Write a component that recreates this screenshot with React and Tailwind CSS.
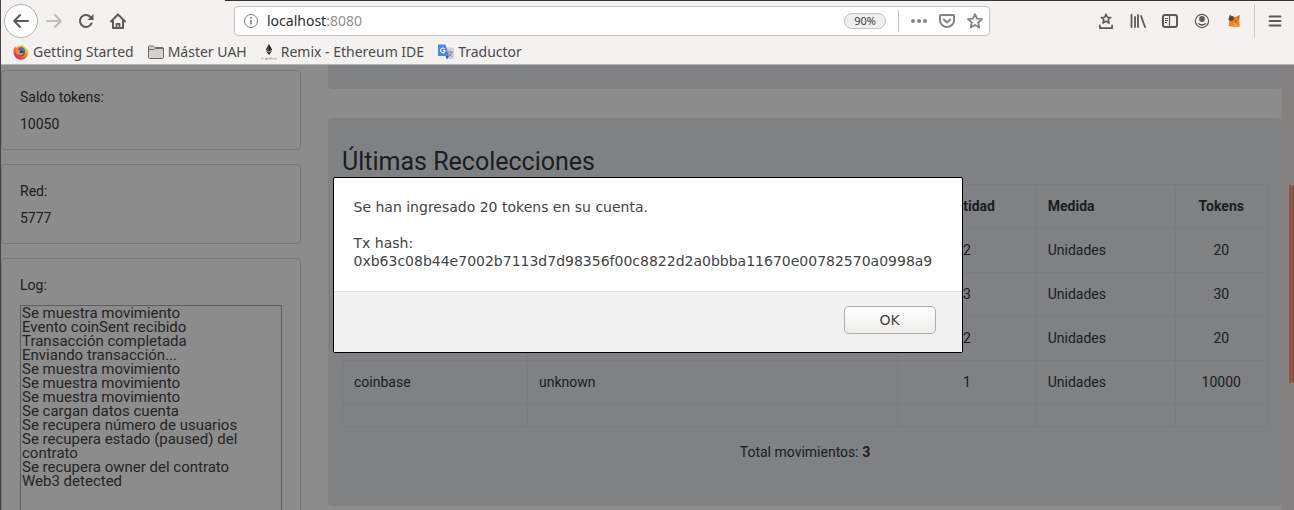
const bookmarks = [
  { label: "Getting Started", Icon: FirefoxIcon },
  { label: "Máster UAH", Icon: FolderIcon },
  { label: "Remix - Ethereum IDE", Icon: RemixIcon },
  { label: "Traductor", Icon: TranslateIcon },
];

const log = [
  "Se muestra movimiento",
  "Evento coinSent recibido",
  "Transacción completada",
  "Enviando transacción...",
  "Se muestra movimiento",
  "Se muestra movimiento",
  "Se muestra movimiento",
  "Se cargan datos cuenta",
  "Se recupera número de usuarios",
  "Se recupera estado (paused) del contrato",
  "Se recupera owner del contrato",
  "Web3 detected",
].join("\n");

const rows = [
  ["", "", "2", "Unidades", "20"],
  ["", "", "3", "Unidades", "30"],
  ["", "", "2", "Unidades", "20"],
  ["coinbase", "unknown", "1", "Unidades", "10000"],
];

function FirefoxIcon() {
  return (
    <svg className="size-4" viewBox="0 0 16 16" aria-hidden="true">
      <defs>
        <linearGradient id="fox" x1="0.85" y1="0.1" x2="0.2" y2="0.95">
          <stop offset="0" stopColor="#ffe226" />
          <stop offset="0.35" stopColor="#ff9a1f" />
          <stop offset="0.7" stopColor="#ff4a3d" />
          <stop offset="1" stopColor="#d9127c" />
        </linearGradient>
      </defs>
      <path d="M1.2 4.2 2 2.2l1.3 1.5C4.800 2 6.500 1.600 8 2c.2-.8.800-1.400 1.600-1.800.3 1.400 1.600 2 2.700 3 1 .9 1.500 1.600 1.700 2.400l.4-.8c1.600 3.600.8 7.200-1.700 9.200-3 2.400-7.400 2.100-10-.5C.4 11.200-.2 7.400 1.200 4.200z" fill="url(#fox)" />
      <circle cx="8" cy="8" r="3.900" fill="#174a9c" />
      <path d="M6.800 2.800c1.800-.5 4.300.8 5 2.900.4 1.500 0 3.300-1 4.200.1-1.900-.8-3.500-2.400-4C7.200 5.500 6.600 4.100 6.800 2.800z" fill="#2b7de0" />
      <path d="M2.500 5.500c1.300-.8 2.700-.6 3.600.2l1.700.2c-.2.8-1.200 1.100-1.500 1.800.2 1.200 1.300 1.700 2.500 1.300 1-.3 1.800.1 2.100.6-1.300 2-3.800 2.400-5.700 1.200-2.100-1.200-3-3.300-2.700-5.300z" fill="#ff8a1c" />
    </svg>
  );
}

function FolderIcon() {
  return (
    <svg className="size-4" viewBox="0 0 16 16" fill="#d4d2d0" stroke="#6a6865" aria-hidden="true">
      <path d="M.5 3c0-.6.4-1 1-1h3.600c.5 0 .8.2 1.100.6L7 3.500h7.500c.6 0 1 .4 1 1v9c0 .6-.4 1-1 1h-13c-.6 0-1-.4-1-1z" />
      <path d="M.5 5.500h5c.8 0 1.200-1 2-1h8" fill="none" />
    </svg>
  );
}

function RemixIcon() {
  return (
    <svg className="size-4" viewBox="0 0 16 16" aria-hidden="true">
      <path d="M8 0l3.200 5.800L8 7.800 4.800 5.800z" fill="#2a2a2a" />
      <path d="M8 0v7.800L4.800 5.800z" fill="#4c4c4c" />
      <path d="M4.800 6.600 8 8.600l3.200-2L8 11z" fill="#1f1f1f" />
      <path d="M1 15.500V14h1.500M4.500 14.800h2V14h-2v1.500h2M8 15.500V14h3v1.500M9.500 14v1.500M12.300 14v1.500M13.500 14l2 1.500M15.500 14l-2 1.500" fill="none" stroke="#aaa6a2" strokeWidth=".8" />
    </svg>
  );
}

function TranslateIcon() {
  return (
    <svg className="size-4" viewBox="0 0 16 16" aria-hidden="true">
      <path d="M6 3.500h9c.5 0 1 .4 1 1V14c0 .6-.5 1-1 1H10z" fill="#d3d3d3" />
      <path d="M9.500 8h5.500M12.200 6.800V8M14 8c-.5 2-2 3.500-3.500 4.500M11 9.200c.6 1.500 1.700 2.600 3.200 3.400" fill="none" stroke="#72818a" strokeWidth=".9" />
      <path d="M1 .5h6.500L11 12H1c-.6 0-1-.4-1-1V1.500c0-.6.4-1 1-1z" fill="#4a86ee" />
      <path d="M7.500 12H11l-2 3.500z" fill="#2a56c6" />
      <path d="M6.600 4.800A2.300 2.300 0 1 0 7.200 6.500H5" fill="none" stroke="#fff" strokeWidth="1.100" />
    </svg>
  );
}

function BackIcon() {
  return (
    <svg className="size-4" viewBox="0 0 16 16" fill="none" stroke="#5c5b5a" strokeWidth="2" strokeLinecap="round" strokeLinejoin="round" aria-hidden="true">
      <path d="M15 8H1.500M7 2 1.200 8 7 14" />
    </svg>
  );
}

function ForwardIcon() {
  return (
    <svg className="size-4" viewBox="0 0 16 16" fill="none" stroke="#bebdbb" strokeWidth="2" strokeLinecap="round" strokeLinejoin="round" aria-hidden="true">
      <path d="M1 8h13.500M9 2l5.800 6L9 14" />
    </svg>
  );
}

function ReloadIcon() {
  return (
    <svg className="size-4" viewBox="0 0 16 16" aria-hidden="true">
      <path d="M13.500 10.300A6 6 0 1 1 12.300 3.800L14 5.500" fill="none" stroke="#5c5b5a" strokeWidth="2" strokeLinecap="round" />
      <path d="M15.500 1v6h-6z" fill="#5c5b5a" />
    </svg>
  );
}

function HomeIcon() {
  return (
    <svg className="size-4" viewBox="0 0 16 16" fill="none" stroke="#5c5b5a" strokeWidth="2" strokeLinecap="round" strokeLinejoin="round" aria-hidden="true">
      <path d="M1 8.500 8 1.500l7 7M3 8v7h10V8" />
      <path d="M6.500 15v-4h3v4" strokeWidth="1.800" />
    </svg>
  );
}

function InfoIcon() {
  return (
    <svg className="size-4 shrink-0" viewBox="0 0 16 16" aria-hidden="true">
      <circle cx="8" cy="8" r="6.500" fill="none" stroke="#7c7c7c" />
      <path d="M8 7v4.500" stroke="#7c7c7c" strokeWidth="1.600" />
      <circle cx="8" cy="4.800" r="1" fill="#7c7c7c" />
    </svg>
  );
}

function DotsIcon() {
  return (
    <svg className="size-4" viewBox="0 0 16 16" fill="#848484" aria-hidden="true">
      <circle cx="2" cy="8" r="2" />
      <circle cx="8" cy="8" r="2" />
      <circle cx="14" cy="8" r="2" />
    </svg>
  );
}

function PocketIcon() {
  return (
    <svg className="size-4" viewBox="0 0 16 16" fill="none" stroke="#848484" strokeWidth="2" strokeLinecap="round" strokeLinejoin="round" aria-hidden="true">
      <path d="M2 2h12c.6 0 1 .4 1 1v4.500a7 6.500 0 0 1-14 0V3c0-.6.4-1 1-1z" />
      <path d="M4.800 6.500 8 9.500l3.200-3" />
    </svg>
  );
}

function StarIcon() {
  return (
    <svg className="size-4" viewBox="0 0 16 16" fill="none" stroke="#848484" strokeWidth="1.800" strokeLinejoin="round" aria-hidden="true">
      <path d="M8 1.200l2 4.500 5 .5-3.800 3.300 1.100 5L8 12l-4.300 2.500 1.100-5L1 6.200l5-.5z" />
    </svg>
  );
}

function BookmarksTrayIcon() {
  return (
    <svg className="size-4" viewBox="0 0 16 16" fill="none" stroke="#5c5b5a" strokeLinejoin="round" aria-hidden="true">
      <path d="M8 1.200l1.300 3 3.400.3-2.500 2.200.8 3.400-3-1.800-3 1.800.8-3.400-2.500-2.200 3.400-.3z" strokeWidth="1.600" />
      <path d="M1.900 12.500v2.600h12.200v-2.600" strokeWidth="1.800" strokeLinecap="round" />
    </svg>
  );
}

function LibraryIcon() {
  return (
    <svg className="size-4" viewBox="0 0 16 16" stroke="#5c5b5a" strokeWidth="1.800" strokeLinecap="round" aria-hidden="true">
      <path d="M1.500 2v12M5 4v10M8 2v12M11 3l4 11" />
    </svg>
  );
}

function SidebarIcon() {
  return (
    <svg className="size-4" viewBox="0 0 16 16" fill="none" stroke="#5c5b5a" aria-hidden="true">
      <rect x="1" y="2" width="14" height="12" rx="2" strokeWidth="2" />
      <path d="M7.500 2v12" strokeWidth="1.200" />
      <path d="M3 5.500h3M3 7.500h3M3 9.500h2" />
    </svg>
  );
}

function AccountIcon() {
  return (
    <svg className="size-4" viewBox="0 0 16 16" aria-hidden="true">
      <circle cx="8" cy="8" r="6.600" fill="none" stroke="#5c5b5a" strokeWidth="1.200" />
      <circle cx="8" cy="6" r="2.900" fill="#5c5b5a" />
      <path d="M3.500 10.200h1.800c1.600 1.200 3.800 1.200 5.400 0h1.800a5.200 5.200 0 0 1-9 0z" fill="#5c5b5a" />
    </svg>
  );
}

function MetamaskIcon() {
  return (
    <svg className="size-4" viewBox="0 0 16 16" aria-hidden="true">
      <path d="M4 2.500 8 4l3-.3 2.500-1.700-.3 5.500.3 3.500.3 2.500H6l-3.500-.5L3 10.500z" fill="#ee8020" />
      <path d="M3.800 2 7.800 3.800 8 6.500 5 8.500 2.300 6.500z" fill="#6d4424" />
      <path d="M11 3.800 13.500 2l-.3 4.500-1.900-.8z" fill="#c9671a" />
      <path d="M7.500 9.500 11 11l1.500 3H7z" fill="#f59a35" />
      <circle cx="9.800" cy="8" r=".8" fill="#6b3d1d" />
    </svg>
  );
}

function MenuIcon() {
  return (
    <svg className="size-4" viewBox="0 0 16 16" stroke="#5c5b5a" strokeWidth="1.800" strokeLinecap="round" aria-hidden="true">
      <path d="M2.500 3.500h11M2.500 8h11M2.500 12.500h11" />
    </svg>
  );
}

const toolbarTools = [
  { label: "Marcadores", Icon: BookmarksTrayIcon },
  { label: "Catálogo", Icon: LibraryIcon },
  { label: "Barra lateral", Icon: SidebarIcon },
  { label: "Cuenta", Icon: AccountIcon },
  { label: "MetaMask", Icon: MetamaskIcon },
];

function BrowserChrome() {
  return (
    <header className="shrink-0 border-b border-[#b9b7b5] bg-[#f3f2f1] font-['Noto_Sans',sans-serif] text-[#4a4a4a]">
      <div className="ml-56 h-px bg-[#3a3234]" />
      <div className="flex h-10 items-center">
        <nav aria-label="Navegación" className="flex w-[233px] shrink-0 items-center pl-[3px]">
          <button aria-label="Atrás" className="flex size-[34px] items-center justify-center rounded-full border border-[#b3b1af] bg-white">
            <BackIcon />
          </button>
          <button aria-label="Adelante" className="flex h-8 w-8 items-center justify-center" disabled>
            <ForwardIcon />
          </button>
          <button aria-label="Recargar" className="flex h-8 w-8 items-center justify-center">
            <ReloadIcon />
          </button>
          <button aria-label="Inicio" className="flex h-8 w-8 items-center justify-center">
            <HomeIcon />
          </button>
        </nav>
        <div className="flex h-[30px] flex-1 items-center rounded-[4px] border border-[#c5c3c1] bg-white pl-2 pr-1.5">
          <InfoIcon />
          <button aria-label="Dirección" className="ml-2 flex-1 text-left text-sm">
            <span className="text-[#2e2e2e]">localhost</span>
            <span className="text-[#8f8f8f]">:8080</span>
          </button>
          <button className="h-4 w-[42px] rounded-full border border-[#c4c4c4] bg-[#efefef] text-[11px] leading-[14px] text-[#3c3c3c]">90%</button>
          <div className="mx-3 h-[22px] w-px bg-[#c4c4c4]" />
          <div className="flex gap-3">
            <button aria-label="Acciones"><DotsIcon /></button>
            <button aria-label="Pocket"><PocketIcon /></button>
            <button aria-label="Añadir marcador"><StarIcon /></button>
          </div>
        </div>
        <div className="flex w-[304px] shrink-0 items-center justify-end">
          <div className="flex gap-4 pr-3">
            {toolbarTools.map(({ label, Icon }) => (
              <button key={label} aria-label={label}><Icon /></button>
            ))}
          </div>
          <button aria-label="Menú" className="flex h-[34px] w-10 items-center justify-center border-l border-[#cfcdcb]">
            <MenuIcon />
          </button>
        </div>
      </div>
      <nav aria-label="Marcadores" className="flex h-[23px] items-center gap-3.5 pb-0.5 pl-3 text-sm">
        {bookmarks.map(({ label, Icon }) => (
          <a key={label} href="#" className="flex items-center gap-1 whitespace-nowrap">
            <Icon />
            {label}
          </a>
        ))}
      </nav>
    </header>
  );
}

function InfoCard({ title, value }) {
  return (
    <section className="h-20 shrink-0 rounded-[4px] border border-black/15 px-[18px] pt-[15px]">
      <h2>{title}</h2>
      <p className="mt-[5px]">{value}</p>
    </section>
  );
}

function Sidebar() {
  return (
    <aside className="flex w-[300px] shrink-0 flex-col gap-3.5 pt-[5px]">
      <InfoCard title="Saldo tokens:" value="10050" />
      <InfoCard title="Red:" value="5777" />
      <section className="rounded-[4px] border border-black/15 px-[18px] pt-[15px]">
        <label htmlFor="log" className="block">Log:</label>
        <textarea
          id="log"
          readOnly
          defaultValue={log}
          className="mt-[9px] block h-[260px] w-full resize-none border border-[#a9a9a9] px-px text-[15px] leading-[14px] text-[#444]"
        />
      </section>
    </aside>
  );
}

function Movements() {
  return (
    <section className="h-[388px] rounded-[4px] bg-[#e9ecef] px-3.5 pt-[29px]">
      <h1 className="text-[25px] leading-[30px]">Últimas Recolecciones</h1>
      <table className="mt-[7px] w-full table-fixed border-collapse [&_td]:border [&_td]:border-[#dee2e6] [&_td]:px-[11px] [&_td]:pb-0.5 [&_th]:border [&_th]:border-[#dee2e6] [&_th]:px-[11px] [&_th]:pb-0.5">
        <colgroup>
          <col className="w-[20%]" />
          <col className="w-[40%]" />
          <col className="w-[15%]" />
          <col className="w-[15%]" />
          <col className="w-[10%]" />
        </colgroup>
        <thead>
          <tr className="h-11">
            <th />
            <th />
            <th>Cantidad</th>
            <th className="text-left">Medida</th>
            <th>Tokens</th>
          </tr>
        </thead>
        <tbody>
          {rows.map(([from, description, amount, unit, tokens], i) => (
            <tr key={i} className="h-11">
              <td>{from}</td>
              <td>{description}</td>
              <td className="text-center">{amount}</td>
              <td>{unit}</td>
              <td className="text-center">{tokens}</td>
            </tr>
          ))}
          <tr className="h-[22px]">
            <td />
            <td />
            <td />
            <td />
            <td />
          </tr>
        </tbody>
      </table>
      <p className="mt-3.5 text-center">
        Total movimientos: <b>3</b>
      </p>
    </section>
  );
}

function AlertDialog() {
  return (
    <div className="absolute inset-0 flex items-start justify-center bg-black/45 pt-28">
      <div
        role="alertdialog"
        aria-describedby="alert-text"
        className="w-[630px] rounded-[2px] border border-black bg-white font-['DejaVu_Sans',sans-serif] text-sm leading-[18px] text-[#444]"
      >
        <div id="alert-text" className="px-5 pb-[21px] pt-5">
          <p>Se han ingresado 20 tokens en su cuenta.</p>
          <p className="mt-[18px]">Tx hash:</p>
          <p>0xb63c08b44e7002b7113d7d98356f00c8822d2a0bbba11670e00782570a0998a9</p>
        </div>
        <div className="flex justify-end border-t border-[#e0e0e0] bg-[#f1f1f1] px-[26px] pb-[18px] pt-3.5">
          <button className="h-7 w-[92px] rounded-[5px] border border-[#b0adaa] bg-linear-to-b from-white to-[#eeedec]">OK</button>
        </div>
      </div>
    </div>
  );
}

export default function App() {
  return (
    <div className="flex h-screen flex-col overflow-hidden border-l border-[#4b4143] bg-white">
      <BrowserChrome />
      <div className="relative flex min-h-0 flex-1 overflow-hidden font-['Roboto',sans-serif] text-sm leading-[22px] text-[#32373c]">
        <Sidebar />
        <main className="ml-[27px] flex min-w-0 flex-1 flex-col gap-[29px]">
          <div className="h-6 shrink-0 rounded-b-[4px] bg-[#e9ecef]" />
          <Movements />
        </main>
        <div className="flex w-3 shrink-0 justify-end bg-[#f5ecec] pt-[120px]">
          <div className="h-[198px] w-[5px] bg-[#ff9e78]" />
        </div>
        <AlertDialog />
      </div>
    </div>
  );
}
